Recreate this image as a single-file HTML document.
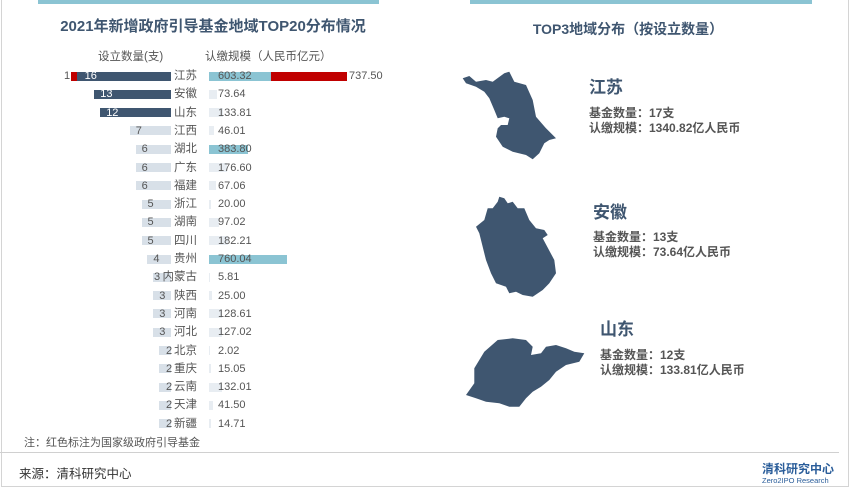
<!DOCTYPE html>
<html><head><meta charset="utf-8"><style>
*{margin:0;padding:0;box-sizing:border-box}
body{width:852px;height:489px;background:#fff;position:relative;overflow:hidden;font-family:"Liberation Sans","Noto Sans CJK SC",sans-serif;}
.a{position:absolute;white-space:nowrap}
.t{font-size:11px;color:#555;line-height:12px}
.pv{font-size:11.5px;color:#555;line-height:12px;text-align:right;width:40px}
.b{position:absolute;height:9px}
.h{font-weight:bold;color:#3f5670}
.info{font-size:12px;font-weight:bold;color:#555;line-height:15px}
</style></head><body>
<div class="a" style="left:1px;top:0;width:848px;height:487px;border:1px solid #d4d4d4;border-top:none"></div>
<div class="a" style="left:0;top:452px;width:839px;height:1px;background:#d0d0d0"></div>
<div class="a" style="left:38px;top:0;width:341px;height:4px;background:#8bc4d3"></div>
<div class="a" style="left:470px;top:0;width:342px;height:4px;background:#8bc4d3"></div>
<div class="a h" style="left:0;width:426px;text-align:center;top:15px;font-size:15px">2021年新增政府引导基金地域TOP20分布情况</div>
<div class="a h" style="left:426px;width:404px;text-align:center;top:19px;font-size:14px">TOP3地域分布（按设立数量）</div>
<div class="a t" style="left:98px;top:51px;font-size:11.5px">设立数量(支)</div>
<div class="a t" style="left:205px;top:51px;font-size:11.5px">认缴规模（人民币亿元）</div>
<div id="rows"></div>
<div class="a t" style="left:24px;top:437px">注：红色标注为国家级政府引导基金</div>
<div class="a" style="left:19px;top:463px;font-size:12.5px;color:#333">来源：清科研究中心</div>
<div class="a" style="left:762px;top:460px;font-size:12px;font-weight:bold;color:#2a5d9a">清科研究中心</div>
<div class="a" style="left:762px;top:476px;font-size:7.5px;color:#2a5d9a">Zero2IPO Research</div>
<svg class="a" style="left:0;top:0" width="852" height="489">
<g fill="#3f5670">
<polygon points="462.7,78.3 469.3,76 476,81.7 486,80 492.7,81.7 504.3,73.3 509.3,71.7 514.3,81.7 526,85 532.7,100 536,116.7 546,128.3 556,138.3 549.3,140 544.3,143.3 539.3,153.3 532.7,159.3 526,155 512.7,151.7 502.7,146.7 496,136.7 497.7,128.3 501,125 507.7,125 509.3,118.3 504.3,116.7 497.7,118.3 494.3,110 489.3,98.3 484.3,91.7 476,86.7 466,83.3"/>
<polygon points="499.3,196.7 504.3,198.3 507.7,203.3 512.7,201.7 517.7,208.3 524.3,208.3 529.3,220 536,228.3 544.3,230 547.7,235 542.7,238.3 554.3,260 556,273.3 549.3,283.3 542.7,290 532.7,296.7 522.7,295 516,291.7 509.3,293.3 506,286.7 496,283.3 491,273.3 486,260 484.3,253.3 479.3,233.3 476,226.7 484.3,220 487.7,208.3 492.7,208.3 497.7,201.7"/>
<polygon points="466,395 474.3,383.3 474.3,368.3 484.3,351.7 497.7,340 512.7,338.3 526,340 532.7,346.7 531,355 541,353.3 546,346.7 556,345 566,348.3 574.3,351.7 584.3,353.3 579.3,361.7 566,365 556,371.7 549.3,380 541,386.7 532.7,391.7 526,398.3 519.3,406.7 509.3,406.7 499.3,403.3 486,401.7 476,398.3"/>
</g></svg>
<div class="a h" style="left:589px;top:73px;font-size:17px">江苏</div>
<div class="a info" style="left:589px;top:106px">基金数量：17支<br>认缴规模：1340.82亿人民币</div>
<div class="a h" style="left:593px;top:198px;font-size:17px">安徽</div>
<div class="a info" style="left:593px;top:230px">基金数量：13支<br>认缴规模：73.64亿人民币</div>
<div class="a h" style="left:600px;top:315px;font-size:17px">山东</div>
<div class="a info" style="left:600px;top:348px">基金数量：12支<br>认缴规模：133.81亿人民币</div>
<script>
var d=[["江苏",16,603.32],["安徽",13,73.64],["山东",12,133.81],["江西",7,46.01],["湖北",6,383.80],["广东",6,176.60],["福建",6,67.06],["浙江",5,20.00],["湖南",5,97.02],["四川",5,182.21],["贵州",4,760.04],["内蒙古",3,5.81],["陕西",3,25.00],["河南",3,128.61],["河北",3,127.02],["北京",2,2.02],["重庆",2,15.05],["云南",2,132.01],["天津",2,41.50],["新疆",2,14.71]];
var h="";
d.forEach(function(r,i){
 var c=76+i*18.3, top=c-4.5, ty=c-6;
 var w=r[1]*5.9, l=171-w, dark=i<3;
 h+='<div class="b" style="left:'+l+'px;top:'+top+'px;width:'+w+'px;background:'+(dark?'#3f5670':'#d8e0e8')+'"></div>';
 var nx=l+(i==0?8:6); if(i==11) nx=154; if(r[1]==2) nx=166;
 h+='<div class="a t" style="left:'+nx+'px;top:'+ty+'px;color:'+(dark?'#fff':'#555')+'">'+r[1]+'</div>';
 h+='<div class="a pv" style="left:157px;top:'+ty+'px">'+r[0]+'</div>';
 var rw=Math.max(1,r[2]*0.102), col=(i==0||i==4||i==10)?'#8bc4d3':'#e8edf2';
 h+='<div class="b" style="left:209px;top:'+top+'px;width:'+rw+'px;background:'+col+'"></div>';
 h+='<div class="a t" style="left:218px;top:'+ty+'px">'+r[2].toFixed(2)+'</div>';
});
h+='<div class="b" style="left:71px;top:71.5px;width:6px;background:#c00000"></div>';
h+='<div class="a t" style="left:64px;top:70px">1</div>';
h+='<div class="b" style="left:271px;top:71.5px;width:76px;background:#c00000"></div>';
h+='<div class="a t" style="left:349px;top:70px">737.50</div>';
document.getElementById("rows").innerHTML=h;
</script>
</body></html>
